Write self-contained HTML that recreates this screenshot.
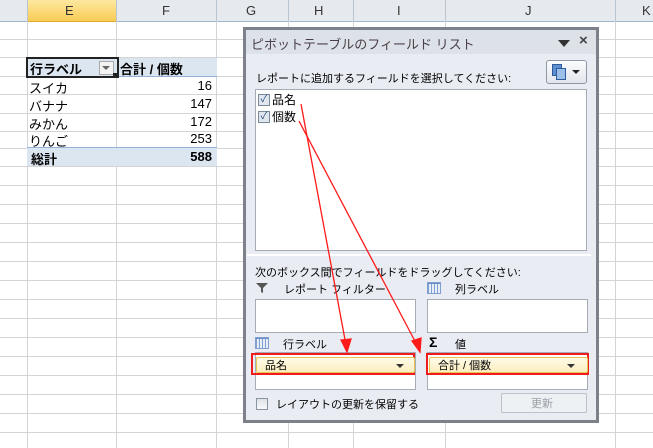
<!DOCTYPE html>
<html><head><meta charset="utf-8"><style>
body{margin:0;width:653px;height:448px;overflow:hidden;background:#fff;font-family:"Liberation Sans","Noto Sans CJK JP",sans-serif;position:relative}
.a{position:absolute}
.t{position:absolute;font-size:12px;white-space:nowrap;color:#000}
.grid{background:linear-gradient(#6b8cc4,#6b8cc4) 0 0/100% 1px no-repeat,repeating-linear-gradient(90deg,#7f9fd0 0 1px,#e8eef8 1px 3px);border:1px solid #7f9fd0;box-sizing:border-box}
</style></head><body>
<div class="a" style="left:0;top:0;width:653px;height:21px;background:#e6e9ee;border-bottom:1px solid #9eb6ce"></div>
<div class="a" style="left:27px;top:0;width:89px;height:21px;background:linear-gradient(#fde7a0,#f9cd55);border-bottom:1px solid #e3a92f"></div>
<svg class="a" style="left:0;top:0" width="653" height="448">
<g stroke="#d4d4d4" stroke-width="1">
<line x1="27.5" y1="0" x2="27.5" y2="448"/><line x1="116.5" y1="0" x2="116.5" y2="448"/><line x1="216.5" y1="0" x2="216.5" y2="448"/>
<line x1="288.5" y1="21" x2="288.5" y2="448"/><line x1="353.5" y1="21" x2="353.5" y2="448"/><line x1="445.5" y1="21" x2="445.5" y2="448"/><line x1="615.5" y1="21" x2="615.5" y2="448"/>
<line x1="0" y1="39.5" x2="653" y2="39.5"/><line x1="0" y1="57.5" x2="653" y2="57.5"/><line x1="0" y1="76.5" x2="653" y2="76.5"/><line x1="0" y1="94.5" x2="653" y2="94.5"/><line x1="0" y1="113.5" x2="653" y2="113.5"/><line x1="0" y1="131.5" x2="653" y2="131.5"/><line x1="0" y1="148.5" x2="653" y2="148.5"/><line x1="0" y1="166.5" x2="653" y2="166.5"/><line x1="0" y1="185.5" x2="653" y2="185.5"/><line x1="0" y1="204.5" x2="653" y2="204.5"/><line x1="0" y1="223.5" x2="653" y2="223.5"/><line x1="0" y1="242.5" x2="653" y2="242.5"/><line x1="0" y1="261.5" x2="653" y2="261.5"/><line x1="0" y1="280.5" x2="653" y2="280.5"/><line x1="0" y1="299.5" x2="653" y2="299.5"/><line x1="0" y1="318.5" x2="653" y2="318.5"/><line x1="0" y1="337.5" x2="653" y2="337.5"/><line x1="0" y1="356.5" x2="653" y2="356.5"/><line x1="0" y1="375.5" x2="653" y2="375.5"/><line x1="0" y1="394.5" x2="653" y2="394.5"/><line x1="0" y1="413.5" x2="653" y2="413.5"/><line x1="0" y1="432.5" x2="653" y2="432.5"/>
</g>
<g stroke="#b9c4d1"><line x1="116.5" y1="0" x2="116.5" y2="21"/><line x1="216.5" y1="0" x2="216.5" y2="21"/><line x1="288.5" y1="0" x2="288.5" y2="21"/><line x1="353.5" y1="0" x2="353.5" y2="21"/><line x1="445.5" y1="0" x2="445.5" y2="21"/><line x1="615.5" y1="0" x2="615.5" y2="21"/><line x1="27.5" y1="0" x2="27.5" y2="21"/></g>
</svg>
<div class="t" style="left:65px;top:3px;font-size:13px;color:#333">E</div>
<div class="t" style="left:162px;top:3px;font-size:13px;color:#333">F</div>
<div class="t" style="left:246px;top:3px;font-size:13px;color:#333">G</div>
<div class="t" style="left:314px;top:3px;font-size:13px;color:#333">H</div>
<div class="t" style="left:397px;top:3px;font-size:13px;color:#333">I</div>
<div class="t" style="left:525px;top:3px;font-size:13px;color:#333">J</div>
<div class="t" style="left:642px;top:3px;font-size:13px;color:#333">K</div>
<div class="a" style="left:27px;top:58px;width:190px;height:18px;background:#dce6f1;border-bottom:1px solid #95b3d7"></div>
<div class="a" style="left:26px;top:57px;width:89px;height:17px;border:2px solid #222"></div>
<div class="a" style="left:99px;top:61px;width:13px;height:12px;background:#f3f3f3;border:1px solid #aaa"></div>
<div class="a" style="left:102px;top:66px;border-left:4px solid transparent;border-right:4px solid transparent;border-top:4px solid #666"></div>
<div class="a" style="left:113px;top:73px;width:5px;height:5px;background:#222"></div>
<div class="t" style="left:30px;top:59px;font-size:13px;font-weight:bold">行ラベル</div>
<div class="t" style="left:120px;top:59px;font-size:13px;font-weight:bold">合計 / 個数</div>
<div class="t" style="left:29px;top:78px;font-size:13px">スイカ</div><div class="t" style="left:180px;top:78px;font-size:13px;width:32px;text-align:right">16</div>
<div class="t" style="left:29px;top:96px;font-size:13px">バナナ</div><div class="t" style="left:180px;top:96px;font-size:13px;width:32px;text-align:right">147</div>
<div class="t" style="left:29px;top:114px;font-size:13px">みかん</div><div class="t" style="left:180px;top:114px;font-size:13px;width:32px;text-align:right">172</div>
<div class="t" style="left:29px;top:131px;font-size:13px">りんご</div><div class="t" style="left:180px;top:131px;font-size:13px;width:32px;text-align:right">253</div>
<div class="a" style="left:27px;top:147px;width:190px;height:18px;background:#dce6f1;border-top:1px solid #95b3d7"></div>
<div class="t" style="left:31px;top:149px;font-size:13px;font-weight:bold">総計</div><div class="t" style="left:180px;top:149px;font-size:13px;width:32px;text-align:right;font-weight:bold">588</div>
<div class="a" style="left:243px;top:27px;width:350px;height:390px;border:3px solid #7d8189;background:#e9edf3"></div>
<div class="a" style="left:246px;top:30px;width:350px;height:24px;background:#dde2e8"></div>
<div class="t" style="left:251px;top:34px;font-size:13px;color:#4a3f4a">ピボットテーブルのフィールド リスト</div>
<div class="a" style="left:558px;top:40px;border-left:6px solid transparent;border-right:6px solid transparent;border-top:7px solid #333"></div>
<div class="t" style="left:579px;top:32px;font-size:15px;font-weight:bold;color:#444">×</div>
<div class="a" style="left:546px;top:60px;width:39px;height:22px;border:1px solid #8f97a2;border-radius:3px;background:linear-gradient(#fbfcfd,#e2e6eb)"></div>
<div class="a" style="left:552px;top:64px;width:8px;height:10px;background:#5b8fd0;border:1px solid #2e5c9b"></div>
<div class="a" style="left:556px;top:68px;width:8px;height:10px;background:#9cc0ea;border:1px solid #2e5c9b"></div>
<div class="a" style="left:572px;top:70px;border-left:4px solid transparent;border-right:4px solid transparent;border-top:4px solid #222"></div>
<div class="t" style="left:256px;top:70px;font-size:11px">レポートに追加するフィールドを選択してください:</div>
<div class="a" style="left:255px;top:89px;width:330px;height:160px;background:#fff;border:1px solid #a5acb5"></div>
<div class="a" style="left:258px;top:94px;width:10px;height:10px;border:1px solid #7a8a9a;background:#dfe6ee;font-size:10px;line-height:10px;color:#2a4a7a;text-align:center">✓</div>
<div class="a" style="left:258px;top:111px;width:10px;height:10px;border:1px solid #7a8a9a;background:#dfe6ee;font-size:10px;line-height:10px;color:#2a4a7a;text-align:center">✓</div>
<div class="t" style="left:272px;top:91px;font-size:12px">品名</div>
<div class="t" style="left:272px;top:108px;font-size:12px">個数</div>
<div class="a" style="left:247px;top:254px;width:344px;height:2px;background:#fff"></div>
<div class="t" style="left:255px;top:264px;font-size:11px">次のボックス間でフィールドをドラッグしてください:</div>
<svg class="a" style="left:255px;top:282px" width="14" height="12"><path d="M1 1H13L8 6V11L6 10V6Z" fill="#555"/></svg>
<div class="t" style="left:284px;top:281px;font-size:11px">レポート フィルター</div>
<div class="a grid" style="left:427px;top:282px;width:14px;height:12px"></div>
<div class="t" style="left:455px;top:281px;font-size:11px">列ラベル</div>
<div class="a" style="left:255px;top:299px;width:159px;height:32px;background:#fff;border:1px solid #a5acb5"></div>
<div class="a" style="left:427px;top:299px;width:159px;height:32px;background:#fff;border:1px solid #a5acb5"></div>
<div class="a grid" style="left:255px;top:337px;width:14px;height:12px"></div>
<div class="t" style="left:283px;top:336px;font-size:11px">行ラベル</div>
<div class="t" style="left:429px;top:334px;font-size:14px;font-weight:bold">Σ</div>
<div class="t" style="left:455px;top:336px;font-size:11px">値</div>
<div class="a" style="left:255px;top:352px;width:159px;height:36px;background:#fff;border:1px solid #a5acb5"></div>
<div class="a" style="left:427px;top:352px;width:159px;height:36px;background:#fff;border:1px solid #a5acb5"></div>
<div class="a" style="left:251px;top:353px;width:164px;height:22px;border:2px solid #ee1c1c;box-sizing:border-box"></div>
<div class="a" style="left:426px;top:353px;width:163px;height:22px;border:2px solid #ee1c1c;box-sizing:border-box"></div>
<div class="a" style="left:256px;top:357px;width:157px;height:14px;border:1px solid #e8c452;border-radius:2px;background:linear-gradient(#fffbe8,#fdeec0)"></div>
<div class="a" style="left:429px;top:357px;width:157px;height:14px;border:1px solid #e8c452;border-radius:2px;background:linear-gradient(#fffbe8,#fdeec0)"></div>
<div class="t" style="left:265px;top:357px;font-size:11px">品名</div>
<div class="t" style="left:438px;top:357px;font-size:11px">合計 / 個数</div>
<div class="a" style="left:396px;top:364px;border-left:4px solid transparent;border-right:4px solid transparent;border-top:4px solid #333"></div>
<div class="a" style="left:567px;top:364px;border-left:4px solid transparent;border-right:4px solid transparent;border-top:4px solid #333"></div>
<div class="a" style="left:256px;top:398px;width:10px;height:10px;border:1px solid #8a949f;background:linear-gradient(#dfe3e8,#f7f8fa)"></div>
<div class="t" style="left:276px;top:396px;font-size:11px">レイアウトの更新を保留する</div>
<div class="a" style="left:501px;top:393px;width:84px;height:18px;border:1px solid #bcc2c9;border-radius:2px;background:#eef1f4"></div>
<div class="t" style="left:531px;top:395px;font-size:11px;color:#9aa0a6">更新</div>
<svg class="a" style="left:0;top:0" width="653" height="448">
<g stroke="#ff1a1a" stroke-width="1.3" fill="#ff1a1a">
<line x1="301" y1="104" x2="346" y2="345"/><path d="M341 340L347 352L351 339Z"/>
<line x1="299" y1="121" x2="417" y2="345"/><path d="M412 341L420 352L421 338Z"/>
</g></svg>
</body></html>
